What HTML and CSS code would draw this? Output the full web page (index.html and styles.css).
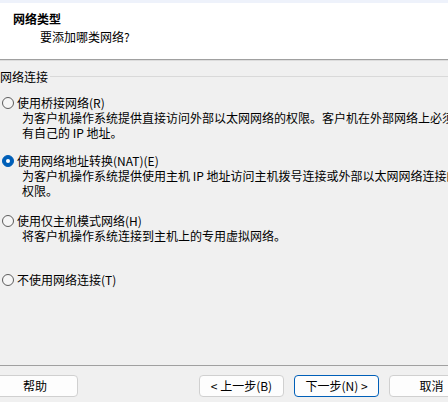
FILE: index.html
```html
<!DOCTYPE html>
<html lang="zh-CN">
<head>
<meta charset="utf-8">
<title>网络类型</title>
<link rel="stylesheet" href="styles.css">
</head>
<body>
<div class="window">
  <div class="topstrip"></div>
  <header class="header">
    <div class="title">网络类型</div>
    <div class="subtitle">要添加哪类网络?</div>
  </header>
  <main class="main">
    <div class="group-label">网络连接</div>
    <div class="option opt-1">
      <div class="opt-row"><span class="radio"></span><span class="opt-text">使用桥接网络(R)</span></div>
      <div class="desc">为客户机操作系统提供直接访问外部以太网网络的权限。客户机在外部网络上必须</div>
      <div class="desc">有自己的 IP 地址。</div>
    </div>
    <div class="option opt-2">
      <div class="opt-row"><span class="radio checked"></span><span class="opt-text">使用网络地址转换(NAT)(E)</span></div>
      <div class="desc">为客户机操作系统提供使用主机 IP 地址访问主机拨号连接或外部以太网网络连接的</div>
      <div class="desc">权限。</div>
    </div>
    <div class="option opt-3">
      <div class="opt-row"><span class="radio"></span><span class="opt-text">使用仅主机模式网络(H)</span></div>
      <div class="desc">将客户机操作系统连接到主机上的专用虚拟网络。</div>
    </div>
    <div class="option opt-4">
      <div class="opt-row"><span class="radio"></span><span class="opt-text">不使用网络连接(T)</span></div>
    </div>
  </main>
  <footer class="footer">
    <button class="btn btn-help">帮助</button>
    <div class="spacer"></div>
    <button class="btn">&lt; 上一步(B)</button>
    <button class="btn btn-default">下一步(N) &gt;</button>
    <button class="btn btn-cancel">取消</button>
  </footer>
</div>
</body>
</html>
```
FILE: styles.css
```css
html, body {
  margin: 0;
  padding: 0;
  background: #f0f0f0;
  overflow: hidden;
}
.window {
  width: 448px;
  height: 402px;
  display: flex;
  flex-direction: column;
  font-family: "Noto Sans CJK SC", "Microsoft YaHei", sans-serif;
  font-size: 12px;
  color: #000;
  overflow: hidden;
}
.topstrip {
  height: 3px;
  background: #eef2fb;
  flex: none;
}
.header {
  flex: none;
  height: 57px;
  box-sizing: border-box;
  background: #fff;
  padding-top: 8px;
  border-bottom: 1px solid #a0a0a0;
  box-shadow: 0 1px 0 #dcdcdc;
}
.title {
  font-weight: bold;
  line-height: 16px;
  padding-left: 13px;
}
.subtitle {
  line-height: 16px;
  margin-top: 2px;
  padding-left: 40px;
}
.main {
  flex: 1;
  padding-top: 9px;
  box-sizing: border-box;
  display: flex;
  flex-direction: column;
}
.group-label {
  display: flex;
  align-items: center;
  line-height: 16px;
  white-space: nowrap;
}
.group-label::after {
  content: "";
  flex: 1;
  height: 1px;
  background: #d9d9d9;
  margin-left: 2px;
  margin-top: -2px;
}
.option {
  white-space: nowrap;
  line-height: 15px;
}
.opt-1 { margin-top: 10px; }
.opt-2 { margin-top: 13px; }
.opt-3 { margin-top: 15px; }
.opt-4 { margin-top: 29px; }
.opt-row {
  display: flex;
  align-items: center;
}
.radio {
  width: 12px;
  height: 12px;
  box-sizing: border-box;
  border-radius: 50%;
  border: 1px solid #5d5d5d;
  background: #f6f6f6;
  margin-left: 2px;
  margin-right: 3px;
  flex: none;
  position: relative;
}
.radio.checked {
  border-color: #005fb8;
  background: #005fb8;
}
.radio.checked::after {
  content: "";
  position: absolute;
  left: 3px;
  top: 3px;
  width: 4px;
  height: 4px;
  border-radius: 50%;
  background: #fff;
}
.desc {
  padding-left: 22px;
}
.footer {
  flex: none;
  height: 37px;
  box-sizing: border-box;
  border-top: 1px solid #a0a0a0;
  padding-top: 9px;
  display: flex;
  align-items: flex-start;
  gap: 10px;
}
.spacer { flex: 1; }
.btn {
  width: 85px;
  height: 22px;
  flex: none;
  box-sizing: border-box;
  background: #fdfdfd;
  border: 1px solid #d0d0d0;
  border-radius: 4px;
  font-family: inherit;
  font-size: 12px;
  color: #000;
  padding: 0;
  line-height: 18px;
}
.btn-help {
  margin-left: -8px;
  width: 86px;
}
.btn-default {
  border-color: #005fb8;
}
.btn-cancel {
  margin-right: -26px;
}
```
